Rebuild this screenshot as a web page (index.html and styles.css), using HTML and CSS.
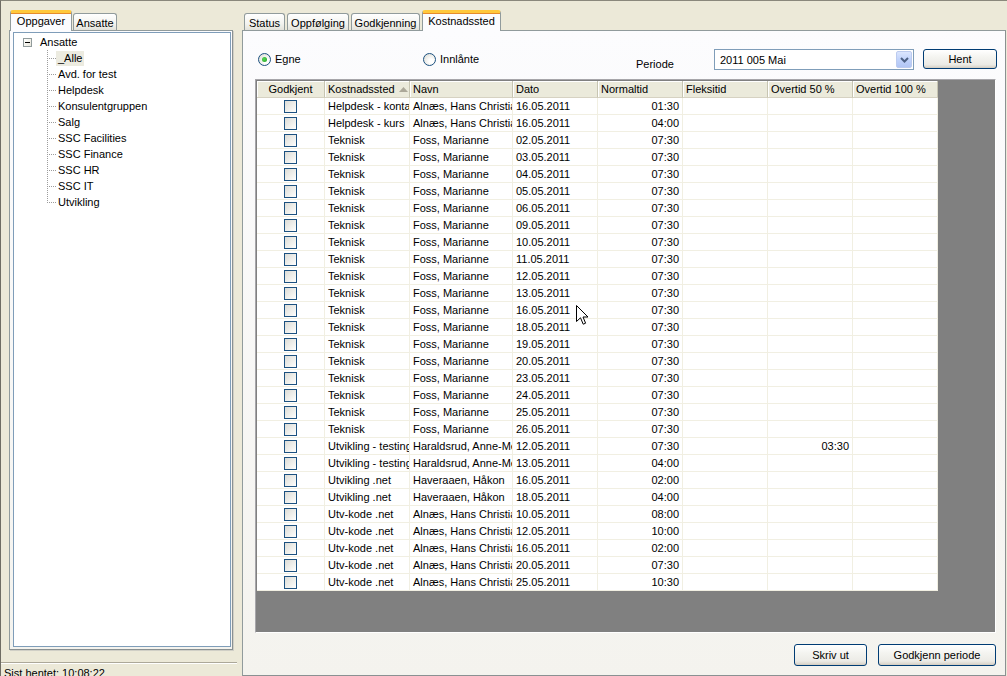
FILE: index.html
```html
<!DOCTYPE html>
<html lang="no">
<head>
<meta charset="utf-8">
<title>Kostnadssted</title>
<link rel="stylesheet" href="styles.css">
</head>
<body>
<div class="app">
  <aside class="left">
    <div class="tabstrip left-tabs">
      <div class="tab selected w-oppgaver">Oppgaver</div>
      <div class="tab w-ansatte">Ansatte</div>
    </div>
    <div class="tabpanel left-panel">
      <div class="tree">
        <div class="root"><span class="expander"></span><span class="root-label">Ansatte</span></div>
        <ul class="children">
          <li><span class="sel">_Alle</span></li>
          <li><span>Avd. for test</span></li>
          <li><span>Helpdesk</span></li>
          <li><span>Konsulentgruppen</span></li>
          <li><span>Salg</span></li>
          <li><span>SSC Facilities</span></li>
          <li><span>SSC Finance</span></li>
          <li><span>SSC HR</span></li>
          <li><span>SSC IT</span></li>
          <li class="last"><span>Utvikling</span></li>
        </ul>
      </div>
    </div>
    <div class="statusbar">Sist hentet: 10:08:22</div>
  </aside>

  <main class="right">
    <div class="tabstrip right-tabs">
      <div class="tab w-status">Status</div>
      <div class="tab w-oppf">Oppfølging</div>
      <div class="tab w-godk">Godkjenning</div>
      <div class="tab selected w-kost">Kostnadssted</div>
    </div>
    <div class="tabpanel main-panel">
      <div class="toolbar">
        <label class="radio r-egne"><span class="dot on"></span>Egne</label>
        <label class="radio r-innl"><span class="dot"></span>Innlånte</label>
        <span class="periode">Periode</span>
        <div class="combo"><span class="combo-text">2011 005 Mai</span><span class="combo-btn"><svg width="9" height="6" viewBox="0 0 9 6"><path d="M1 1 L4.5 4.5 L8 1" fill="none" stroke="#4d6185" stroke-width="2"/></svg></span></div>
        <button class="btn hent">Hent</button>
      </div>

      <div class="gridwrap">
        <div class="grid" id="grid">
          <div class="hc center">Godkjent</div>
          <div class="hc">Kostnadssted <svg class="sort" width="9" height="5" viewBox="0 0 9 5"><path d="M0 5 L4.5 0 L9 5 Z" fill="#aca899"/></svg></div>
          <div class="hc">Navn</div>
          <div class="hc">Dato</div>
          <div class="hc">Normaltid</div>
          <div class="hc">Fleksitid</div>
          <div class="hc">Overtid 50 %</div>
          <div class="hc">Overtid 100 %</div>
        </div>
      </div>

      <div class="actions">
        <button class="btn skriv">Skriv ut</button>
        <button class="btn godkjenn">Godkjenn periode</button>
      </div>
    </div>
  </main>
</div>
<svg class="cursor" width="13" height="21" viewBox="0 0 13 21"><path d="M0.5 0.5 L0.5 16.5 L4.5 12.8 L7.2 19.2 L9.6 18.2 L7 12 L12 12 Z" fill="#fff" stroke="#000" stroke-width="1"/></svg>
<script src="app.js"></script>
</body>
</html>
```

FILE: app.js
```js
(function () {
  var rows = [
    ["Helpdesk - kontaktsenter", "Alnæs, Hans Christian", "16.05.2011", "01:30", ""],
    ["Helpdesk - kurs", "Alnæs, Hans Christian", "16.05.2011", "04:00", ""]
  ];
  ["02","03","04","05","06","09","10","11","12","13","16","18","19","20","23","24","25","26"].forEach(function (d) {
    rows.push(["Teknisk", "Foss, Marianne", d + ".05.2011", "07:30", ""]);
  });
  rows.push(["Utvikling - testing", "Haraldsrud, Anne-Mette", "12.05.2011", "07:30", "03:30"]);
  rows.push(["Utvikling - testing", "Haraldsrud, Anne-Mette", "13.05.2011", "04:00", ""]);
  rows.push(["Utvikling .net", "Haveraaen, Håkon", "16.05.2011", "02:00", ""]);
  rows.push(["Utvikling .net", "Haveraaen, Håkon", "18.05.2011", "04:00", ""]);
  [["10","08:00"],["12","10:00"],["16","02:00"],["20","07:30"],["25","10:30"]].forEach(function (r) {
    rows.push(["Utv-kode .net", "Alnæs, Hans Christian", r[0] + ".05.2011", r[1], ""]);
  });
  var g = document.getElementById("grid");
  var html = "";
  rows.forEach(function (r) {
    html += '<div class="c center"><span class="chk"></span></div>' +
      '<div class="c">' + r[0] + '</div>' +
      '<div class="c">' + r[1] + '</div>' +
      '<div class="c">' + r[2] + '</div>' +
      '<div class="c num">' + r[3] + '</div>' +
      '<div class="c"></div>' +
      '<div class="c num">' + r[4] + '</div>' +
      '<div class="c"></div>';
  });
  g.insertAdjacentHTML("beforeend", html);
})();
```

FILE: styles.css
```css
* { box-sizing: border-box; }
html, body { margin: 0; padding: 0; }
body {
  width: 1007px;
  height: 676px;
  overflow: hidden;
  background: #ece9d8;
  font-family: "Liberation Sans", Arial, sans-serif;
  font-size: 11px;
  color: #000;
  border-top: 1px solid #8a887c;
  border-left: 1px solid #6f6d64;
  position: relative;
}
.app { display: flex; height: 675px; }

.left { width: 241px; flex: none; display: flex; flex-direction: column; padding-top: 9px; }
.right { flex: 1; display: flex; flex-direction: column; padding-top: 9px; padding-right: 1px; }

.tabstrip { display: flex; align-items: flex-end; height: 20px; flex: none; position: relative; z-index: 2; }
.left-tabs { margin-left: 9px; }
.right-tabs { margin-left: 2px; gap: 2px; }
.left-tabs .tab.selected { margin-right: 1px; }

.tab {
  height: 17px;
  border: 1px solid #919b9c;
  border-bottom: none;
  border-radius: 3px 3px 0 0;
  background: linear-gradient(#ffffff, #f3f3ef 60%, #e3e2da);
  display: flex;
  align-items: center;
  justify-content: center;
  white-space: nowrap;
  padding-top: 1px;
}
.tab.selected {
  height: 21px;
  margin-bottom: -1px;
  background: #fcfcfe;
  border-top: 3px solid #ffc83c;
  box-shadow: inset 0 1px 0 #e68b2c;
  border-radius: 3px 3px 0 0;
  padding-top: 0;
  padding-bottom: 2px;
}
.w-oppgaver { width: 62px; }
.w-ansatte { width: 44px; }
.w-status { width: 41px; }
.w-oppf { width: 62px; }
.w-godk { width: 69px; }
.w-kost { width: 79px; }

.tabpanel {
  border: 1px solid #919b9c;
  background: linear-gradient(#fcfcfe, #f4f3ee);
  flex: none;
}
.left-panel {
  margin-left: 8px;
  width: 224px;
  height: 620px;
  padding: 1px 1px 2px 3px;
  border-color: #919b9c #8a9192 #8a9192 #919b9c;
  box-shadow: 1px 1px 0 #d0cfc6;
}
.tree {
  height: 100%;
  background: #fff;
  border: 1px solid #7f9db9;
  padding-top: 1px;
}
.root { height: 16px; display: flex; align-items: center; }
.expander {
  width: 9px; height: 9px;
  margin-left: 9px;
  border: 1px solid #919b9c;
  background: linear-gradient(135deg, #fff, #e8e6db);
  display: flex; align-items: center; justify-content: center;
}
.expander::before { content: ""; width: 5px; height: 1px; background: #000; }
.root-label { margin-left: 7px; padding: 0 1px; }

.children {
  list-style: none;
  margin: 0 0 0 33px;
  padding: 0;
}
.children li {
  height: 16px;
  display: flex;
  align-items: center;
  background:
    repeating-linear-gradient(to bottom, #9c9c9c 0 1px, transparent 1px 2px) 0 0 / 1px 100% no-repeat,
    repeating-linear-gradient(to right, #9c9c9c 0 1px, transparent 1px 2px) 0 8px / 9px 1px no-repeat;
}
.children li.last {
  background:
    repeating-linear-gradient(to bottom, #9c9c9c 0 1px, transparent 1px 2px) 0 0 / 1px 9px no-repeat,
    repeating-linear-gradient(to right, #9c9c9c 0 1px, transparent 1px 2px) 0 8px / 9px 1px no-repeat;
}
.children li span { margin-left: 9px; padding: 1px 2px; line-height: 13px; }
.children li span.sel { background: #ecebe0; }

.statusbar {
  flex: none;
  margin-top: 12px;
  width: 236px;
  border-top: 1px solid #aca899;
  box-shadow: inset 0 1px 0 #fff;
  padding: 4px 0 0 3px;
  line-height: 13px;
  white-space: nowrap;
}

.main-panel {
  height: 646px;
  padding: 18px 8px 0 12px;
  display: flex;
  flex-direction: column;
  border-color: #919b9c #8a9192 #8a9192 #919b9c;
}
.toolbar { height: 22px; display: flex; align-items: flex-start; padding-left: 3px; }
.radio { display: flex; align-items: center; height: 20px; white-space: nowrap; }
.r-egne { width: 165px; }
.r-innl { width: 213px; }
.dot {
  width: 13px; height: 13px;
  border-radius: 50%;
  border: 1px solid #1c5180;
  background: radial-gradient(circle at 65% 65%, #fff 20%, #dcdcd5 90%);
  margin-right: 4px;
  display: flex; align-items: center; justify-content: center;
}
.dot.on::before {
  content: ""; width: 5px; height: 5px; border-radius: 50%;
  background: radial-gradient(circle at 40% 40%, #55d655, #21a121);
}
.periode { width: 78px; margin-top: 9px; }
.combo {
  width: 200px; height: 21px;
  border: 1px solid #7f9db9;
  background: #fff;
  display: flex; align-items: center; justify-content: space-between;
  padding: 1px;
}
.combo-text { padding-left: 4px; }
.combo-btn {
  width: 16px; height: 17px;
  border: 1px solid #bccbef;
  border-radius: 2px;
  background: linear-gradient(#dbe6fe, #c1d3fb 50%, #b2c6f5);
  display: flex; align-items: center; justify-content: center;
}
.btn {
  font: inherit;
  color: #000;
  border: 1px solid #003c74;
  border-radius: 3px;
  background: linear-gradient(#ffffff, #f4f4f0 40%, #ecebe6 80%, #d6d0c5);
  box-shadow: inset 0 -1px 0 #d6d0c5;
  padding: 0;
  height: 21px;
  cursor: default;
}
.hent { width: 74px; margin-left: 9px; height: 20px; }

.gridwrap {
  margin-top: 8px;
  height: 554px;
  width: 741px;
  background: #808080;
  border: 1px solid;
  border-color: #a7a6aa #fff #fff #a7a6aa;
  padding: 1px 0 0 1px;
}
.grid {
  display: grid;
  grid-template-columns: 68px 85px 103px 85px 85px 85px 85px 85px;
  grid-auto-rows: 17px;
  width: 681px;
  background: #fff;
}
.hc {
  background: #ebeadb;
  border-right: 1px solid #c7c5b2;
  border-bottom: 1px solid #d6d2c2;
  box-shadow: inset 1px 1px 0 #fff;
  padding-left: 3px;
  display: flex; align-items: center;
  white-space: nowrap;
  overflow: hidden;
}
.hc.center { justify-content: center; padding-left: 0; }
.sort { margin-left: 4px; }
.c {
  border-right: 1px solid #f1efe2;
  border-bottom: 1px solid #f1efe2;
  padding: 0 3px;
  display: flex; align-items: center;
  white-space: nowrap;
  overflow: hidden;
}
.c.center { justify-content: center; padding: 0; }
.c.num { justify-content: flex-end; }
.chk {
  width: 13px; height: 13px;
  border: 1px solid #1c5180;
  background: linear-gradient(135deg, #dcdcd7, #f4f4f1 70%, #fff);
}

.actions { display: flex; justify-content: flex-end; gap: 11px; margin-top: 11px; padding-right: 1px; }
.skriv { width: 73px; height: 22px; }
.godkjenn { width: 118px; height: 22px; }

.cursor { position: absolute; left: 575px; top: 304px; z-index: 5; }
```
